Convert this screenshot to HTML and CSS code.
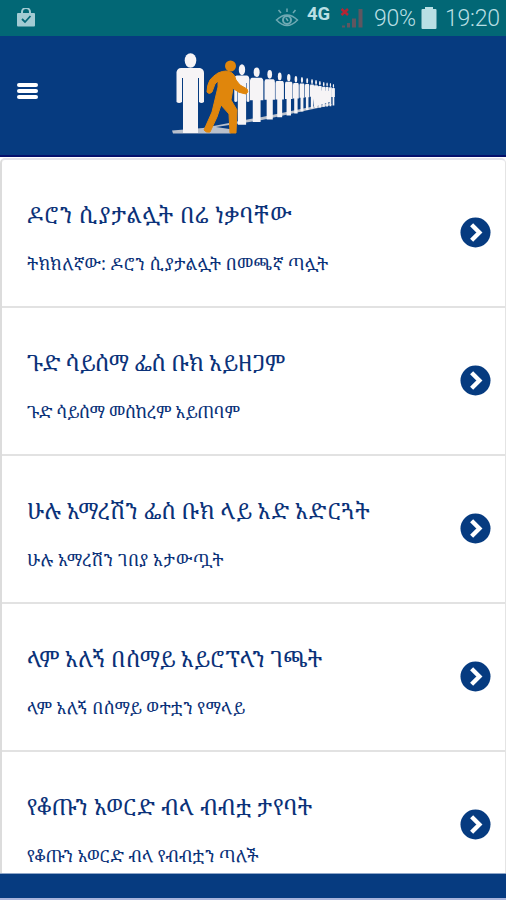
FILE: index.html
```
<!DOCTYPE html>
<html lang="am">
<head>
    <meta charset="UTF-8">
    <meta name="viewport" content="width=device-width, initial-scale=1.0">
    <title>ተረትና ምሳሌ</title>
    <link rel="stylesheet" href="styles.css">
</head>
<body>
    <div class="status-bar">
        <svg class="shop-icon" width="20" height="19" viewBox="0 0 20 19">
            <path d="M6 5V4a4 4 0 0 1 8 0v1" fill="none" stroke="#a3cbd3" stroke-width="2"/>
            <rect x="1" y="5" width="18" height="13.5" rx="1" fill="#a3cbd3"/>
            <path d="M6 11l3 3 5.500-6" fill="none" stroke="#056878" stroke-width="1.800"/>
        </svg>
        <svg class="eye-icon" width="24" height="20" viewBox="0 0 24 20" fill="none" stroke="#6fa9b3" stroke-width="1.500">
            <path d="M1.500 12Q12 2 22.500 12Q12 23 1.500 12z"/>
            <circle cx="12" cy="12" r="4" stroke-width="2"/>
            <path d="M11 10l2 3M12 4V0.500M6 5L3.500 2M18 5l2.500-3"/>
        </svg>
        <span class="network">4G</span>
        <svg class="signal-icon" width="23" height="22" viewBox="0 0 23 22">
            <path d="M1.500 2l6.500 6M8 2L1.500 8" stroke="#b32634" stroke-width="2.500"/>
            <path d="M2 18.500h3v2H2zM7 16h3v4.500H7zM12 11.500h4v9h-4zM18.500 2h4v18.500h-4z" fill="#5f5660"/>
        </svg>
        <span class="percent">90%</span>
        <svg class="battery-icon" width="16" height="22" viewBox="0 0 16 22" fill="#b9dfe4">
            <rect x="4" y="0" width="8" height="3"/>
            <rect x="0.500" y="2" width="15" height="20" rx="1"/>
        </svg>
        <span class="clock">19:20</span>
    </div>

    <div class="header">
        <button class="menu-btn" aria-label="Menu">
            <span></span><span></span><span></span>
        </button>
        <svg class="logo" width="168" height="88" viewBox="170 50 168 88">
            <defs>
                <g id="person">
                    <ellipse cx="14.500" cy="7.500" rx="5.800" ry="7.300"/>
                    <path d="M5 15h19q4 1 4 5v29q-2.500 2-5 0V25h-1v55H7V25H6v24q-3 2-5.500 0V19q1-4 4.500-4z"/>
                </g>
                <g id="row-person">
                    <ellipse cx="14.500" cy="7" rx="6.500" ry="7"/>
                    <path d="M4 15h21q4 1 4 5v28h-6v32H6V48H0V19q1-4 4-4z"/>
                </g>
            </defs>
            <path d="M172 130.500L203 128L250 119L262 117L330 103L332 105L262 120L216 127L236 130L230 133.500H173z" fill="#b9c0cc"/>
            <g fill="#f6f4f6">
                <use href="#person" transform="translate(176 53)"/>
                <use href="#person" transform="translate(234 64) scale(.55 .76)"/>
                <use href="#row-person" transform="translate(250 67.500) scale(.46 .68)"/>
                <use href="#row-person" transform="translate(264.500 70) scale(.36 .62)"/>
                <use href="#row-person" transform="translate(275.500 72.500) scale(.29 .56)"/>
                <use href="#row-person" transform="translate(285 74) scale(.26 .52)"/>
                <use href="#row-person" transform="translate(293 76) scale(.2 .47)"/>
                <use href="#row-person" transform="translate(299.500 77) scale(.17 .43)"/>
                <use href="#row-person" transform="translate(305 78) scale(.15 .4)"/>
                <use href="#row-person" transform="translate(310 79) scale(.14 .37)"/>
                <use href="#row-person" transform="translate(314 80) scale(.14 .35)"/>
                <use href="#row-person" transform="translate(318 81) scale(.13 .33)"/>
                <use href="#row-person" transform="translate(322 82) scale(.12 .31)"/>
                <use href="#row-person" transform="translate(325.500 82.500) scale(.11 .3)"/>
                <use href="#row-person" transform="translate(329 83) scale(.1 .29)"/>
                <use href="#row-person" transform="translate(332 84) scale(.1 .27)"/>
                <path d="M312 90l18 1v11l-16 5z"/>
            </g>
            <g fill="#e0860c">
                <circle cx="230.500" cy="66" r="5.500"/>
                <path d="M218 73q9-4 14 0 3 2 4 7l4 5 7 4q2 3-1 5-8-1-12-5l-1-1-2 12 6 10-1 23h-6l-1-19-8-9-4 12-7 15q-4 1-6-2l8-18 6-25v-6l-3 3-3 8q-3 3-5 0 0-7 3-12 3-4 8-7z" stroke="#e0860c" stroke-width="1"/>
            </g>
        </svg>
    </div>

    <div class="list">
        <div class="item">
            <div class="item-text">
                <h2>ዶሮን ሲያታልሏት በሬ ነቃባቸው</h2>
                <p>ትክክለኛው: ዶሮን ሲያታልሏት በመጫኛ ጣሏት</p>
            </div>
            <svg class="arrow" viewBox="0 0 32 32"><circle cx="16" cy="16" r="15.500"/><path d="M12 8l8 8-8 8"/></svg>
        </div>
        <div class="item">
            <div class="item-text">
                <h2>ጉድ ሳይሰማ ፌስ ቡክ አይዘጋም</h2>
                <p>ጉድ ሳይሰማ መስከረም አይጠባም</p>
            </div>
            <svg class="arrow" viewBox="0 0 32 32"><circle cx="16" cy="16" r="15.500"/><path d="M12 8l8 8-8 8"/></svg>
        </div>
        <div class="item">
            <div class="item-text">
                <h2>ሁሉ አማረሽን ፌስ ቡክ ላይ አድ አድርጓት</h2>
                <p>ሁሉ አማረሽን ገበያ አታውጧት</p>
            </div>
            <svg class="arrow" viewBox="0 0 32 32"><circle cx="16" cy="16" r="15.500"/><path d="M12 8l8 8-8 8"/></svg>
        </div>
        <div class="item">
            <div class="item-text">
                <h2>ላም አለኝ በሰማይ አይሮፕላን ገጫት</h2>
                <p>ላም አለኝ በሰማይ ወተቷን የማላይ</p>
            </div>
            <svg class="arrow" viewBox="0 0 32 32"><circle cx="16" cy="16" r="15.500"/><path d="M12 8l8 8-8 8"/></svg>
        </div>
        <div class="item">
            <div class="item-text">
                <h2>የቆጡን አወርድ ብላ ብብቷ ታየባት</h2>
                <p>የቆጡን አወርድ ብላ የብብቷን ጣለች</p>
            </div>
            <svg class="arrow" viewBox="0 0 32 32"><circle cx="16" cy="16" r="15.500"/><path d="M12 8l8 8-8 8"/></svg>
        </div>
    </div>

    <div class="footer"></div>
</body>
</html>
```
FILE: styles.css
```
* {
    box-sizing: border-box;
}

body {
    margin: 0;
    height: 900px;
    display: flex;
    flex-direction: column;
    overflow: hidden;
    background: #fff;
    font-family: Roboto, sans-serif;
}

.status-bar {
    flex: none;
    height: 36px;
    padding: 0 8px 0 16px;
    display: flex;
    align-items: center;
    background: #026775;
    color: #b9dfe4;
}

.shop-icon {
    margin-top: -2px;
}

.eye-icon {
    margin-left: auto;
    margin-right: -2px;
}

.network {
    width: 24px;
    margin: -9px 9px 0 10px;
    font-size: 18.5px;
    font-weight: bold;
}

.signal-icon {
    margin-right: 11px;
}

.percent,
.clock {
    font-size: 23px;
    font-weight: 300;
    letter-spacing: -0.2px;
    white-space: nowrap;
}

.percent {
    width: 42px;
    margin-right: 5px;
}

.battery-icon {
    margin-right: 8px;
}

.clock {
    width: 53px;
}

.header {
    flex: none;
    height: 121px;
    padding: 14px 168px 0 17px;
    display: flex;
    justify-content: space-between;
    align-items: flex-start;
    background: #063b80;
    border-bottom: 2px solid #05106b;
}

.menu-btn {
    width: 21px;
    margin-top: 33px;
    padding: 0;
    border: none;
    background: none;
    display: flex;
    flex-direction: column;
    gap: 2px;
}

.menu-btn span {
    height: 4px;
    border-radius: 2px;
    background: #fff;
}

.list {
    flex: 1;
    min-height: 0;
    margin-top: 1px;
    overflow: hidden;
    border-top: 2px solid #e3e3ea;
    border-left: 2px solid #dcdcdc;
    border-right: 1px solid #e4e4e4;
    border-radius: 5px 5px 0 0;
}

.item {
    height: 147.9px;
    padding: 0 14px 0 25px;
    display: flex;
    align-items: center;
    justify-content: space-between;
    border-bottom: 2px solid #e2e2e2;
}

.item-text {
    padding-top: 11px;
    color: #0b3279;
    font-family: "Noto Serif Ethiopic", "Abyssinica SIL", FreeSerif, "Noto Sans Ethiopic", serif;
    white-space: nowrap;
}

.item h2 {
    margin: 0 0 18px;
    font-size: 22.5px;
    line-height: 34px;
    font-weight: normal;
}

.item p {
    margin: 0;
    font-size: 17.2px;
    line-height: 28px;
}

.item:nth-child(1) h2 { letter-spacing: 0.4px; }
.item:nth-child(1) p { letter-spacing: 0.15px; }
.item:nth-child(2) h2 { letter-spacing: -0.35px; }
.item:nth-child(2) p { letter-spacing: -0.25px; }
.item:nth-child(3) p { letter-spacing: 0.2px; }
.item:nth-child(4) h2 { letter-spacing: -0.2px; }
.item:nth-child(5) h2 { letter-spacing: 0.15px; }

.arrow {
    width: 31px;
    height: 31px;
    flex: none;
    fill: #063b80;
}

.arrow path {
    fill: none;
    stroke: #fff;
    stroke-width: 4.5;
}

.footer {
    flex: none;
    height: 27px;
    background: #063b80;
    border-top: 1px solid #8fa6c8;
    border-bottom: 2px solid #a9b4dc;
}
```
